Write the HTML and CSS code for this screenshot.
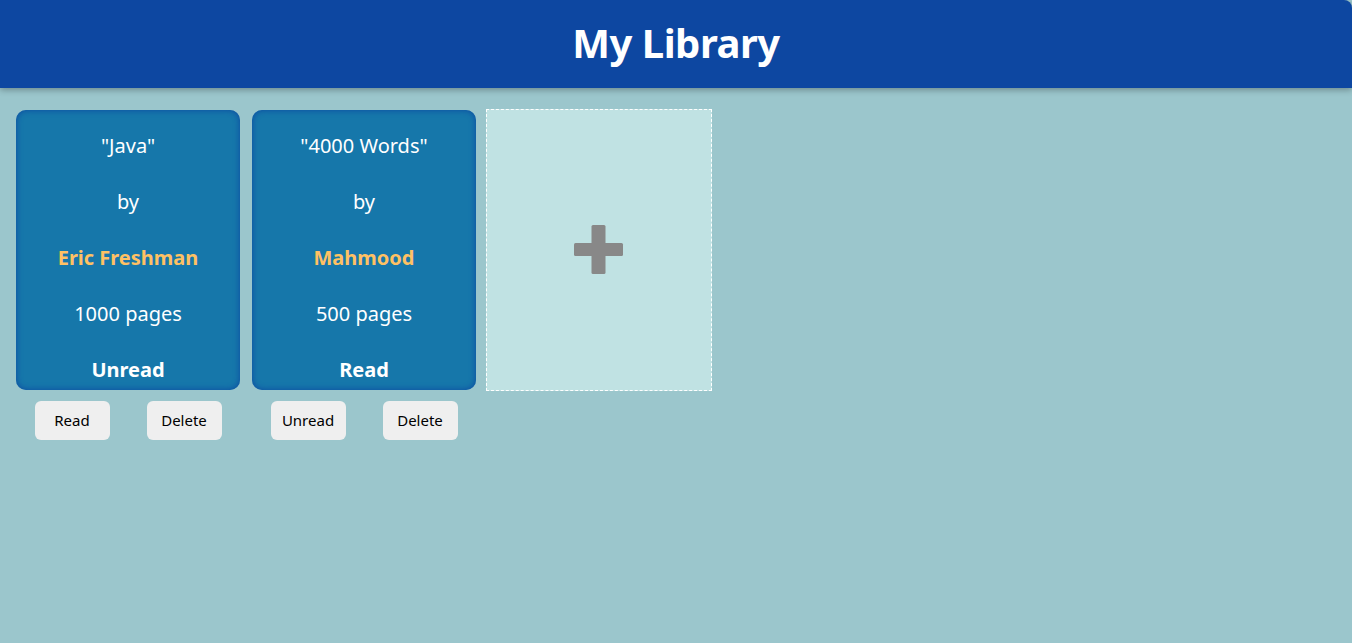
FILE: index.html
```html
<!DOCTYPE html>
<html>
<head>
<meta charset="utf-8">
<link rel="stylesheet" href="styles.css">
</head>
<body>
<header class="header"><h1 class="title">My Library</h1></header>
<main class="library">
  <div class="book">
    <div class="card">
      <p class="line">"Java"</p>
      <p class="line">by</p>
      <p class="line author">Eric Freshman</p>
      <p class="line">1000 pages</p>
      <p class="line status">Unread</p>
    </div>
    <div class="actions">
      <button class="btn">Read</button>
      <button class="btn">Delete</button>
    </div>
  </div>
  <div class="book">
    <div class="card">
      <p class="line">"4000 Words"</p>
      <p class="line">by</p>
      <p class="line author">Mahmood</p>
      <p class="line">500 pages</p>
      <p class="line status">Read</p>
    </div>
    <div class="actions">
      <button class="btn">Unread</button>
      <button class="btn">Delete</button>
    </div>
  </div>
  <div class="add-card">
    <svg class="plus" width="50" height="50" viewBox="0 0 50 50"><rect x="17.5" y="0" width="14" height="49" rx="1.5" fill="#888"/><rect x="0" y="18" width="49" height="13" rx="1.5" fill="#888"/></svg>
  </div>
</main>
</body>
</html>
```
FILE: styles.css
```css
html, body {
  margin: 0;
  padding: 0;
  background: #9bc6cc;
  font-family: "Noto Sans", "Open Sans", sans-serif;
  min-height: 643px;
}
.header {
  height: 88px;
  box-sizing: border-box;
  padding-bottom: 4px;
  background: #0d47a1;
  border-top-right-radius: 8px;
  box-shadow: 0 2px 6px rgba(0, 0, 0, 0.3);
  display: flex;
  align-items: center;
  justify-content: center;
}
.title {
  margin: 0;
  color: #fff;
  font-size: 40px;
  font-weight: 700;
  letter-spacing: -0.5px;
}
.library {
  display: flex;
  align-items: flex-start;
  gap: 12px;
  padding: 22px 16px;
}
.book {
  width: 224px;
}
.card {
  height: 280px;
  box-sizing: border-box;
  padding-top: 18px;
  background: #1677aa;
  border-radius: 10px;
  box-shadow: inset 0 0 6px #0d47a1;
  display: flex;
  flex-direction: column;
  gap: 20px;
  align-items: center;
  overflow: hidden;
}
.line {
  margin: 0;
  height: 36px;
  flex: none;
  line-height: 36px;
  color: #fff;
  font-size: 20px;
}
.author {
  color: #fec164;
  font-weight: 700;
}
.status {
  font-weight: 700;
}
.actions {
  display: flex;
  justify-content: space-around;
  margin-top: 11px;
}
.btn {
  width: 75px;
  height: 39px;
  border: none;
  border-radius: 6px;
  background: #efefef;
  color: #000;
  font-family: "Noto Sans", sans-serif;
  font-size: 15px;
  padding: 0 0 2px;
}
.add-card {
  width: 226px;
  height: 282px;
  box-sizing: border-box;
  margin-left: -2px;
  margin-top: -1px;
  background: #c0e2e3;
  border: 1px dashed #fff;
  display: flex;
  align-items: center;
  justify-content: center;
}
.plus {
  display: block;
  margin-top: -1px;
}
```
